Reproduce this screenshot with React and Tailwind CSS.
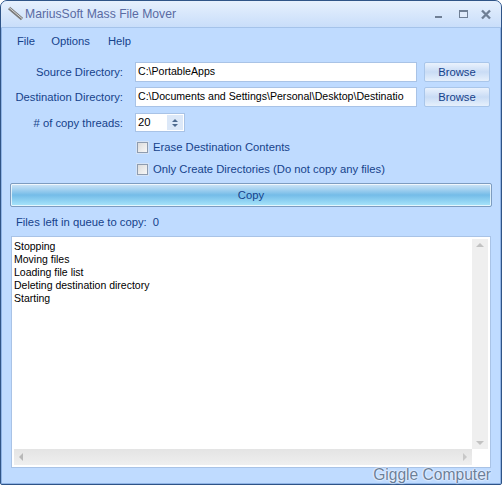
import React from "react";

function Label({ children }) {
  return <div className="w-[122px] text-right text-[#15428b] text-[11.25px] shrink-0">{children}</div>;
}

function BrowseButton() {
  return (
    <button className="w-[66px] h-[20px] ml-[7px] rounded-[2px] border border-[#a9c6ea] bg-gradient-to-b from-[#eaf2fd] via-[#c9dcf5] to-[#e6f0fc] text-[#15428b] text-[11.25px] leading-[16px]">
      Browse
    </button>
  );
}

function Check({ label, className }) {
  return (
    <div className={`flex items-center pl-[136px] ${className}`}>
      <div className="w-[11px] h-[11px] border border-[#8e9cb0] bg-gradient-to-br from-[#dcdcdc] to-[#f7f7f7] outline outline-1 outline-[#d5e3f6]" />
      <span className="ml-[5px] text-[#15428b] text-[11.25px]">{label}</span>
    </div>
  );
}

export default function App() {
  return (
    <div
      className="relative w-[502px] h-[485px] bg-white overflow-hidden text-[12px] leading-[16px]"
      style={{ fontFamily: '"Liberation Sans", sans-serif' }}
    >
      <div className="flex flex-col h-full rounded-t-[7px] rounded-b-[2px] border border-[#2f5487] bg-[#bfdbff] overflow-hidden shadow-[inset_0_0_0_1px_#8fb4e6]">
        {/* Title bar */}
        <div className="flex items-center h-[27px] shrink-0 pl-[6px] pr-[9px] border-b border-[#a5c3ea] bg-gradient-to-b from-[#e6f0fd] to-[#c9defa]">
          <svg width="18" height="16" viewBox="0 0 18 16" className="shrink-0">
            <path d="M2 2 L15 13" stroke="#7a7a7a" strokeWidth="3.2" />
            <path d="M2 1.5 L15 12.5" stroke="#d8d8d8" strokeWidth="1" />
          </svg>
          <span className="text-[12.2px] text-[#5a6ba3]">MariusSoft Mass File Mover</span>
          <div className="ml-auto flex items-center">
            <svg width="10" height="10" viewBox="0 0 10 10">
              <rect x="1" y="7" width="7" height="2" fill="#6f7f95" />
            </svg>
            <svg width="12" height="10" viewBox="0 0 12 10" className="ml-[13px]">
              <rect x="2.5" y="1.5" width="8" height="7" fill="#dfeafa" stroke="#6f7f95" />
              <rect x="2" y="1" width="9" height="2" fill="#6f7f95" />
            </svg>
            <svg width="12" height="11" viewBox="0 0 12 11" className="ml-[11px]">
              <path d="M2 1.5 L10 9.5 M10 1.5 L2 9.5" stroke="#6f7f95" strokeWidth="2.4" />
            </svg>
          </div>
        </div>

        {/* Menu */}
        <div className="flex h-[26px] items-center shrink-0 pl-[16px] text-[#15428b] text-[11.25px] gap-[16px]">
          <span>File</span>
          <span>Options</span>
          <span className="ml-[2px]">Help</span>
        </div>

        {/* Form */}
        <div className="flex items-center mt-[8px] h-[20px] shrink-0">
          <Label>Source Directory:</Label>
          <div className="ml-[12px] w-[282px] h-[20px] bg-white border border-[#a9c3e6] pl-[2px] text-black text-[10.6px] leading-[17px]">C:\PortableApps</div>
          <BrowseButton />
        </div>
        <div className="flex items-center mt-[5px] h-[20px] shrink-0">
          <Label>Destination Directory:</Label>
          <div className="ml-[12px] w-[282px] h-[20px] bg-white border border-[#a9c3e6] pl-[2px] text-black text-[10.6px] leading-[17px] overflow-hidden whitespace-nowrap">
            C:\Documents and Settings\Personal\Desktop\Destinatio
          </div>
          <BrowseButton />
        </div>
        <div className="flex items-center mt-[6px] h-[19px] shrink-0">
          <Label># of copy threads:</Label>
          <div className="ml-[12px] w-[50px] h-[19px] bg-white border border-[#a9c3e6] pl-[2px] flex text-black text-[11.25px] leading-[16px]">
            <span className="flex-1">20</span>
            <div className="w-[16px] flex flex-col bg-[#dce8f8] items-center justify-center gap-[2px] my-[1px] mr-[1px]">
              <div className="w-0 h-0 border-x-[3px] border-x-transparent border-b-[3px] border-b-[#4e6a8e]" />
              <div className="w-0 h-0 border-x-[3px] border-x-transparent border-t-[3px] border-t-[#4e6a8e]" />
            </div>
          </div>
        </div>
        <Check label="Erase Destination Contents" className="mt-[7px] h-[16px] shrink-0" />
        <Check label="Only Create Directories (Do not copy any files)" className="mt-[6px] h-[16px] shrink-0" />

        {/* Copy button */}
        <div className="mx-[9px] mt-[6px] h-[24px] shrink-0 rounded-[2px] border border-[#7d9cc0] flex items-center justify-center text-[#15428b] text-[11.25px] bg-gradient-to-b from-[#cfe5f7] via-[#74bce8] to-[#a9e6fb] shadow-[inset_0_0_0_1px_rgba(255,255,255,0.7)]">
          Copy
        </div>

        {/* Queue */}
        <div className="flex h-[16px] mt-[7px] shrink-0 pl-[15px] text-[#15428b] text-[11.25px]">
          <span>Files left in queue to copy:</span>
          <span className="ml-[6px]">0</span>
        </div>

        {/* Log */}
        <div className="mx-[10px] mt-[6px] flex-1 min-h-0 mb-[16px] bg-white border border-[#a9c3e6] flex flex-col p-[2px]">
          <div className="flex flex-1 min-h-0">
            <div className="flex-1 pt-[1px] leading-[13px] text-black text-[10.5px]">
              <div>Stopping</div>
              <div>Moving files</div>
              <div>Loading file list</div>
              <div>Deleting destination directory</div>
              <div>Starting</div>
            </div>
            <div className="w-[16px] bg-[#efefef] flex flex-col items-center justify-between py-[4px]">
              <div className="w-0 h-0 border-x-[4px] border-x-transparent border-b-[4px] border-b-[#c2c2c2]" />
              <div className="w-0 h-0 border-x-[4px] border-x-transparent border-t-[4px] border-t-[#c2c2c2]" />
            </div>
          </div>
          <div className="flex shrink-0 h-[16px]">
            <div className="flex-1 bg-gradient-to-b from-[#e4e4e4] to-[#efefef] flex items-center justify-between px-[5px]">
              <div className="w-0 h-0 border-y-[4px] border-y-transparent border-r-[4px] border-r-[#b8b8b8]" />
              <div className="w-0 h-0 border-y-[4px] border-y-transparent border-l-[4px] border-l-[#c8c8c8]" />
            </div>
            <div className="w-[16px]" />
          </div>
        </div>
      </div>

      {/* Watermark */}
      <div
        className="absolute right-[11px] bottom-[1px] text-[15.6px] leading-[18px] text-[#6b7f99]"
        style={{ textShadow: "0 0 2px #fff, 0 0 2px #fff" }}
      >
        Giggle Computer
      </div>
    </div>
  );
}
